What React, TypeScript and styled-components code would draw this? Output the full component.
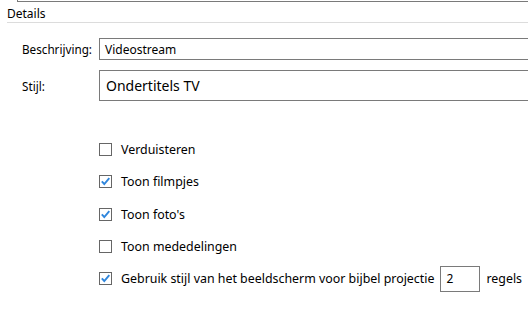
import React from "react";
import styled, { createGlobalStyle } from "styled-components";

const Global = createGlobalStyle`
  html, body { margin: 0; padding: 0; background: #ffffff; }
  body { font-family: "Noto Sans", "Open Sans", sans-serif; font-size: 12px; color: #000; }
`;

const Page = styled.div`
  width: 528px;
  height: 314px;
  overflow: hidden;
  position: relative;
  background: #fff;
`;

const PrevBox = styled.div`
  margin-left: 17px;
  height: 1px;
  border-left: 1px solid #7a7a7a;
  border-bottom: 1px solid #7a7a7a;
`;

const SectionHeader = styled.div`
  margin: 5px 0 0 7px;
  padding-bottom: 1px;
  line-height: 14px;
  border-bottom: 1px solid #dcdcdc;
  font-size: 12px;
`;

const Form = styled.div`
  display: grid;
  grid-template-columns: 77px 1fr;
  row-gap: 10px;
  margin: 15px 0 0 22px;
  align-items: center;
`;

const Label = styled.div`
  font-size: 11.7px;
  line-height: 16px;
`;

const Field = styled.div<{ $h: number; $fs: number }>`
  height: ${(p) => p.$h - 2}px;
  margin-right: -20px;
  border: 1px solid #7a7a7a;
  display: flex;
  align-items: center;
  padding-left: ${(p) => (p.$fs > 13 ? 6 : 5)}px;
  font-size: ${(p) => p.$fs}px;
`;

const Checks = styled.div`
  display: flex;
  flex-direction: column;
  gap: 19.3px;
  margin: 42px 0 0 99px;
`;

const CheckRow = styled.div`
  display: flex;
  align-items: center;
  height: 13px;
  font-size: 12.4px;
  white-space: nowrap;
`;

const Box = styled.span<{ $checked: boolean }>`
  width: 11px;
  height: 11px;
  border: 1px solid #666;
  margin-right: 9px;
  display: inline-flex;
  align-items: center;
  justify-content: center;
  flex: none;
`;

const NumBox = styled.div`
  width: 33px;
  height: 24px;
  border: 1px solid #7a7a7a;
  margin: 0 6px 0 6px;
  padding-left: 5px;
  display: flex;
  align-items: center;
  font-size: 12px;
`;

const Check = ({ checked }: { checked: boolean }) => (
  <Box $checked={checked}>
    {checked && (
      <svg width="11" height="11" viewBox="0 0 11 11">
        <path d="M1.8 5.3 L4.3 8 L9.3 2.2" fill="none" stroke="#2f86dc" strokeWidth="1.9" />
      </svg>
    )}
  </Box>
);

export default function App() {
  return (
    <Page>
      <Global />
      <PrevBox />
      <SectionHeader>Details</SectionHeader>
      <Form>
        <Label>Beschrijving:</Label>
        <Field $h={22} $fs={12}>Videostream</Field>
        <Label>Stijl:</Label>
        <Field $h={31} $fs={14}>Ondertitels TV</Field>
      </Form>
      <Checks>
        <CheckRow><Check checked={false} />Verduisteren</CheckRow>
        <CheckRow><Check checked={true} />Toon filmpjes</CheckRow>
        <CheckRow><Check checked={true} />Toon foto's</CheckRow>
        <CheckRow><Check checked={false} />Toon mededelingen</CheckRow>
        <CheckRow>
          <Check checked={true} />Gebruik stijl van het beeldscherm voor bijbel projectie
          <NumBox>2</NumBox>regels
        </CheckRow>
      </Checks>
    </Page>
  );
}
